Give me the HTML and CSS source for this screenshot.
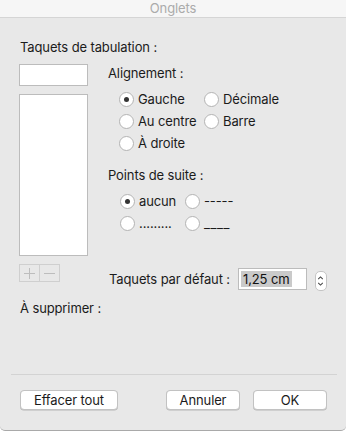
FILE: index.html
```html
<!DOCTYPE html>
<html lang="fr">
<head>
  <meta charset="UTF-8">
  <meta name="viewport" content="width=device-width, initial-scale=1.0">
  <title>Onglets</title>
  <link rel="stylesheet" href="styles.css">
</head>
<body>
  <div class="window">
    <div class="titlebar">Onglets</div>

    <div class="content">
      <div class="heading">Taquets de tabulation :</div>

      <div class="main">
        <div class="left">
          <div class="field"></div>
          <div class="list"></div>
          <div class="plusminus">
            <span class="pm">
              <svg width="11" height="11" viewBox="0 0 11 11"><path d="M5.5 0v11M0 5.5h11" stroke="#bdbdbd" stroke-width="1"/></svg>
            </span>
            <span class="pm">
              <svg width="11" height="11" viewBox="0 0 11 11"><path d="M0 5.5h11" stroke="#bdbdbd" stroke-width="1"/></svg>
            </span>
          </div>
        </div>

        <div class="right">
          <div class="label">Alignement :</div>
          <div class="radios align">
            <label class="opt"><span class="radio on"></span>Gauche</label>
            <label class="opt"><span class="radio"></span>Décimale</label>
            <label class="opt"><span class="radio"></span>Au centre</label>
            <label class="opt"><span class="radio"></span>Barre</label>
            <label class="opt"><span class="radio"></span>À droite</label>
          </div>

          <div class="label second">Points de suite :</div>
          <div class="radios leader">
            <label class="opt"><span class="radio on"></span>aucun</label>
            <label class="opt"><span class="radio"></span>-----</label>
            <label class="opt"><span class="radio"></span>.........</label>
            <label class="opt"><span class="radio"></span><span class="under">____</span></label>
          </div>

          <div class="defaults">
            <span class="deflabel">Taquets par défaut :</span>
            <span class="numfield"><span class="sel">1,25 cm</span></span>
            <span class="stepper">
              <svg width="12" height="20" viewBox="0 0 12 20">
                <path d="M3.5 8l2.5-2.5 2.5 2.5M3.5 12l2.5 2.5 2.5-2.5" fill="none" stroke="#444" stroke-width="1.1"/>
              </svg>
            </span>
          </div>
        </div>
      </div>

      <div class="heading remove">À supprimer :</div>
    </div>

    <div class="footer">
      <div class="sep"></div>
      <div class="buttons">
        <button class="btn wide">Effacer tout</button>
        <span class="spacer"></span>
        <button class="btn">Annuler</button>
        <button class="btn">OK</button>
      </div>
    </div>
  </div>
</body>
</html>
```

FILE: styles.css
```css
body {
  margin: 0;
  background: #ffffff;
  font-family: Inter, "Liberation Sans", sans-serif;
  font-size: 13px;
  letter-spacing: -0.12px;
  color: #1b1b1b;
}
.window {
  width: 346px;
  height: 431px;
  box-sizing: border-box;
  background: #e8e8e8;
  border-bottom: 1px solid #a9a9a9;
  border-radius: 0 0 5px 5px;
  display: flex;
  flex-direction: column;
  overflow: hidden;
}
.titlebar {
  height: 17px;
  line-height: 16px;
  background: #f6f6f6;
  border-bottom: 1px solid #d5d5d5;
  text-align: center;
  color: #ababab;
  font-size: 13px;
}
.content {
  flex: 1;
  padding: 0 19px;
}
.heading {
  line-height: 16px;
  margin-top: 21px;
  padding-left: 1px;
}
.main {
  display: flex;
  gap: 20px;
  margin-top: 9px;
}
.left {
  width: 69px;
  display: flex;
  flex-direction: column;
  gap: 8px;
}
.field {
  height: 22px;
  box-sizing: border-box;
  background: #fff;
  border: 1px solid #bcbcbc;
}
.list {
  height: 162px;
  box-sizing: border-box;
  background: #fff;
  border: 1px solid #bcbcbc;
}
.plusminus {
  display: flex;
  width: 41px;
  height: 18px;
  box-sizing: border-box;
  border: 1px solid #cfcfcf;
}
.pm {
  flex: 1;
  display: flex;
  align-items: center;
  justify-content: center;
}
.pm + .pm {
  border-left: 1px solid #cfcfcf;
}
.right {
  flex: 1;
}
.label {
  line-height: 16px;
  margin-top: 1px;
}
.label.second {
  margin-top: 13px;
}
.radios {
  display: grid;
  margin-top: 7px;
  padding-left: 11px;
  grid-auto-rows: 22px;
}
.radios.align {
  grid-template-columns: 85px auto;
}
.radios.leader {
  grid-template-columns: 65px auto;
  padding-left: 12px;
}
.opt {
  display: flex;
  align-items: center;
  gap: 4px;
}
.under {
  letter-spacing: 0.6px;
}
.radio {
  width: 15px;
  height: 15px;
  box-sizing: border-box;
  border-radius: 50%;
  background: #fff;
  border: 1px solid #b3b3b3;
  display: flex;
  align-items: center;
  justify-content: center;
}
.radio.on::after {
  content: "";
  width: 5px;
  height: 5px;
  border-radius: 50%;
  background: #333;
}
.defaults {
  display: flex;
  align-items: center;
  margin-top: 34px;
  height: 22px;
}
.deflabel {
  padding-left: 1px;
  width: 129px;
}
.numfield {
  width: 69px;
  height: 22px;
  box-sizing: border-box;
  background: #fff;
  border: 1px solid #bcbcbc;
  padding: 2px 2px;
  display: flex;
  align-items: center;
}
.sel {
  background: #cacaca;
  line-height: 16px;
  padding: 0 2px;
  color: #111;
}
.stepper {
  margin-left: 8px;
  width: 12px;
  height: 20px;
  box-sizing: border-box;
  border: 1px solid #c4c4c4;
  border-radius: 5px;
  background: #fff;
  display: flex;
  margin-top: 3px;
}
.stepper svg {
  margin-left: -1px;
  margin-top: -1px;
}
.remove {
  margin-top: 10px;
}
.footer {
  padding-bottom: 20px;
}
.sep {
  height: 1px;
  background: #d3d3d3;
  margin: 0 9px 0 11px;
}
.buttons {
  display: flex;
  gap: 13px;
  padding: 15px 19px 0 20px;
}
.spacer {
  flex: 1;
}
.btn {
  font-family: inherit;
  font-size: 13px;
  letter-spacing: inherit;
  color: #1b1b1b;
  height: 20px;
  width: 74px;
  padding: 0;
  background: #fff;
  border: 1px solid #c2c2c2;
  border-radius: 4px;
  box-shadow: 0 0.5px 0 #b5b5b5;
}
.btn.wide {
  width: 98px;
}
```
